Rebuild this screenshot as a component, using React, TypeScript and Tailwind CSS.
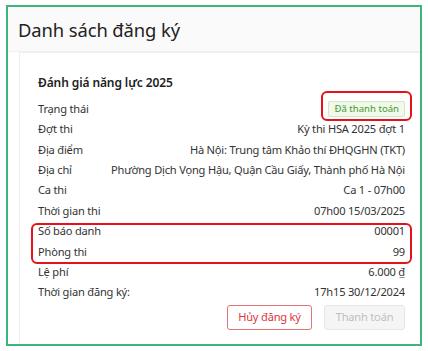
const rows: { label: string; value: string }[] = [
  { label: 'Đợt thi', value: 'Kỳ thi HSA 2025 đợt 1' },
  { label: 'Địa điểm', value: 'Hà Nội: Trung tâm Khảo thí ĐHQGHN (TKT)' },
  { label: 'Địa chỉ', value: 'Phường Dịch Vọng Hậu, Quận Cầu Giấy, Thành phố Hà Nội' },
  { label: 'Ca thi', value: 'Ca 1 - 07h00' },
  { label: 'Thời gian thi', value: '07h00 15/03/2025' },
]

const marked = [
  { label: 'Số báo danh', value: '00001' },
  { label: 'Phòng thi', value: '99' },
]

const tail = [
  { label: 'Lệ phí', value: '6.000 ₫' },
  { label: 'Thời gian đăng ký:', value: '17h15 30/12/2024' },
]

function Row({ label, value }: { label: string; value: string }) {
  return (
    <div className="flex h-[20.4px] items-center justify-between whitespace-nowrap">
      <span className="text-[#333] shrink-0">{label}</span>
      <span className="text-[#333]">{value}</span>
    </div>
  )
}

export default function App() {
  return (
    <div
      className="w-[428px] h-[351px] bg-white pt-[5px] pl-[6px]"
      style={{ fontFamily: '"Noto Sans", "Open Sans", sans-serif' }}
    >
      <div className="w-[416px] h-[341px] border-2 border-[#3bb57a] overflow-hidden flex flex-col">
        <div className="h-[45px] shrink-0 bg-[#fafafa] border-b border-[#f0f0f0] pl-[10px] flex items-center">
          <h1 className="text-[18.4px] tracking-[-0.1px] text-[#222] pt-[2px]">Danh sách đăng ký</h1>
        </div>
        <div className="flex-1 pl-[11px]">
          <div className="h-full border-l border-t border-[#eeeeee] pl-[18px] pr-[15px] text-[11.1px] tracking-[-0.2px]">
            <div className="h-[46px] flex items-center pt-[14px]">
              <h2 className="text-[12px] font-semibold text-[#222] tracking-[-0.1px]">Đánh giá năng lực 2025</h2>
            </div>
            <div className="flex h-[20.4px] items-center justify-between">
              <span className="text-[#333]">Trạng thái</span>
              <div className="relative">
                <span className="block h-[16px] leading-[14px] px-[5px] text-[9.6px] tracking-normal text-[#4a9a2a] bg-[#f0f9eb] border border-[#cfe9c0] rounded-[2px]">
                  Đã thanh toán
                </span>
                <div className="absolute -left-[7px] -right-[7px] -top-[10px] -bottom-[4px] border-2 border-[#e5121b] rounded-[6px]" />
              </div>
            </div>
            {rows.map((r) => (
              <Row key={r.label} {...r} />
            ))}
            <div className="relative">
              {marked.map((r) => (
                <Row key={r.label} {...r} />
              ))}
              <div className="absolute -left-[7px] -right-[7px] top-[2px] -bottom-[2px] border-2 border-[#e5121b] rounded-[6px]" />
            </div>
            {tail.map((r) => (
              <Row key={r.label} {...r} />
            ))}
            <div className="flex justify-end gap-[12px] mt-[2px]">
              <button className="h-[25px] w-[85px] border border-[#e57373] rounded-[3px] text-[#d9363e] bg-white">
                Hủy đăng ký
              </button>
              <button className="h-[25px] w-[81px] border border-[#e6e6e6] rounded-[3px] text-[#c0c0c0] bg-[#f5f5f5]">
                Thanh toán
              </button>
            </div>
          </div>
        </div>
      </div>
    </div>
  )
}
